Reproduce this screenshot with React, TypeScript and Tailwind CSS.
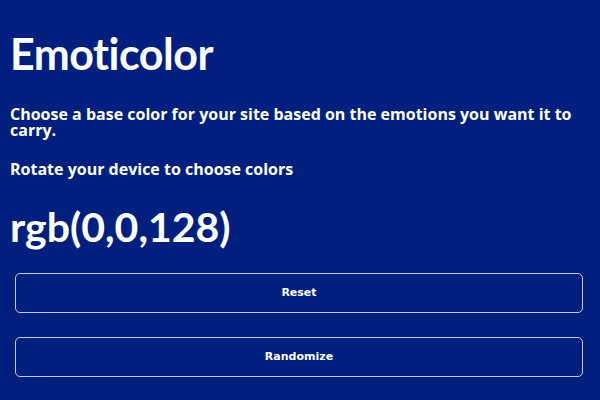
export default function App() {
  return (
    <div className="w-[600px] h-[400px] overflow-hidden bg-[#001f7e] text-white px-[10px] font-['Lato','Noto_Sans',sans-serif]">
      <h1 className="text-[43px] font-bold leading-[50px] pt-[29px] tracking-[-0.5px]">Emoticolor</h1>
      <p className="text-[16px] font-bold leading-[16px] mt-[27px] font-['Open_Sans','Lato',sans-serif]">
        Choose a base color for your site based on the emotions you want it to carry.
      </p>
      <p className="text-[16px] font-bold leading-[16px] mt-[23px] font-['Open_Sans','Lato',sans-serif]">
        Rotate your device to choose colors
      </p>
      <div className="text-[41px] font-bold leading-[48px] mt-[26px]">rgb(0,0,128)</div>
      <div className="flex flex-col gap-[24px] mt-[22px] pl-[5px] pr-[7px] font-['DejaVu_Sans',sans-serif]">
        <button className="h-[40px] w-full border border-[#c8cbe0] rounded-[5px] text-[11px] font-bold">
          Reset
        </button>
        <button className="h-[40px] w-full border border-[#c8cbe0] rounded-[5px] text-[11px] font-bold">
          Randomize
        </button>
      </div>
    </div>
  );
}
